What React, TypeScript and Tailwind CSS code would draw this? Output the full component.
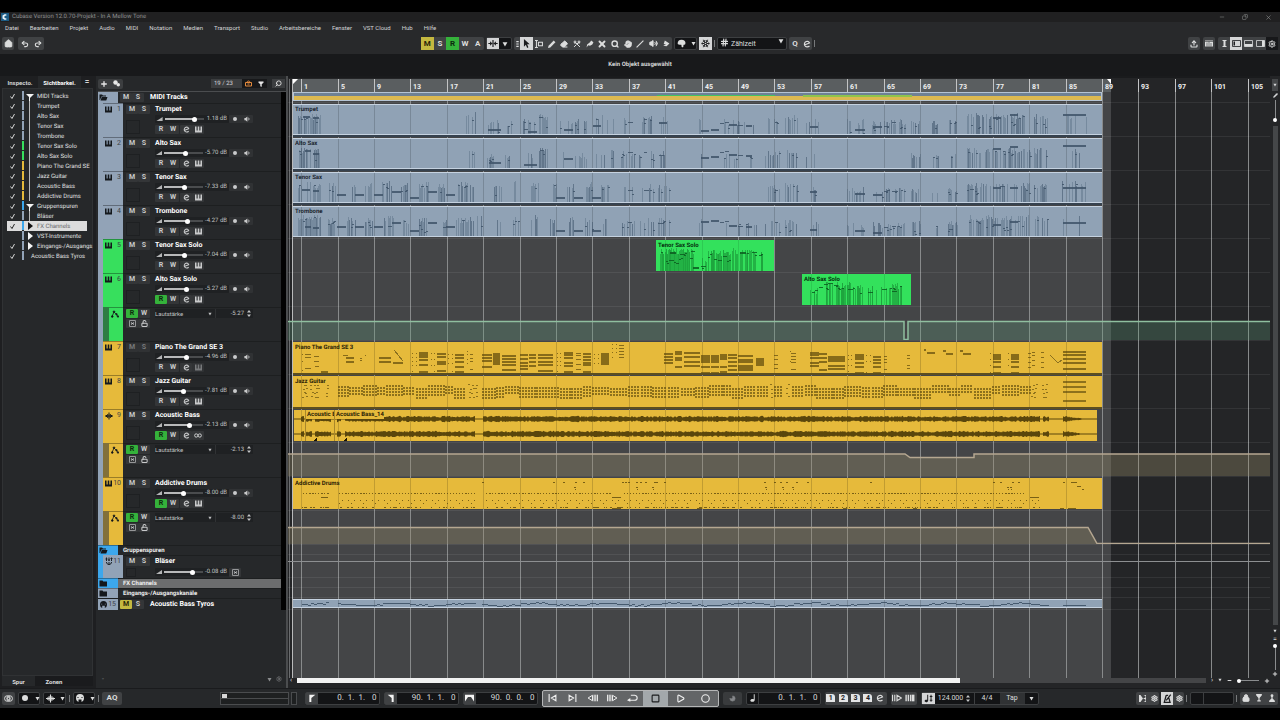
import type { ReactNode } from "react";
import {
  Home, Undo2, Redo2, Search, Plus, Eraser, Scissors, Hand, Volume2, Circle, Settings, Lock, Upload,
  Snowflake, Hash, Minus, X, Copy, Pencil, Play, Square, Moon, Filter, LockOpen,
} from "lucide-react";

const SLATE = "#92a3b7";
const GREEN = "#37df5d";
const YELLOW = "#e6ba3b";

/* ---------- timeline geometry ---------- */
const ORIGIN = 288;
const END = 2000;
const barX = (bar: number) => Math.floor(301.7 + (bar - 1) * 9.1);
const gridBars = Array.from({ length: 45 }, (_, i) => 1 + i * 4);
const labelledBars = gridBars.slice(0, 27);

function rng(seed: number) {
  let s = seed;
  return () => {
    s = (s * 1664525 + 1013904223) % 4294967296;
    return s / 4294967296;
  };
}

/* ---------- small glyphs ---------- */
const Caret = ({ className = "size-[6px]" }: { className?: string }) => (
  <svg viewBox="0 0 10 10" className={className} fill="currentColor"><path d="M1 2h8L5 9z" /></svg>
);
const Keys = ({ className = "size-[8px]" }: { className?: string }) => (
  <svg viewBox="0 0 16 16" className={className} fill="currentColor">
    <path d="M0 1h3.500v9.500h2.700V1h3.600v9.500h2.700V1H16v14H0z" />
  </svg>
);
const Wave = ({ className = "size-[9px]" }: { className?: string }) => (
  <svg viewBox="0 0 16 16" className={className} stroke="currentColor" strokeWidth="2" fill="none">
    <path d="M0 8h16M3 6v4M5.500 4v8M8 1v14M10.500 4v8M13 6v4" />
  </svg>
);
const Nodes = ({ className = "size-[9px]" }: { className?: string }) => (
  <svg viewBox="0 0 16 16" className={className} stroke="currentColor" strokeWidth="1.600" fill="currentColor">
    <path d="M2 13L6 4l5 5 3 4" fill="none" />
    <circle cx="2.500" cy="13" r="1.700" /><circle cx="6" cy="3.500" r="1.700" /><circle cx="11" cy="8.500" r="1.500" /><circle cx="14" cy="13" r="1.500" />
  </svg>
);
const Folder = ({ open = false }: { open?: boolean }) => (
  <svg viewBox="0 0 16 14" className="h-[7px] w-[9px]" fill="#14181c">
    {open ? <path d="M0 1h5l2 2h6v2H4L1 12H0zM4.500 6H16l-2.500 7H2z" /> : <path d="M0 1h6l1.500 2H15v10H0z" />}
  </svg>
);
const EditE = ({ className = "size-[8px]" }: { className?: string }) => (
  <svg viewBox="0 0 16 16" className={className} fill="none" stroke="currentColor" strokeWidth="2.400">
    <path d="M4 9.500L13 6C12 3 9 2 6.500 3 3 4.500 2 8 3.500 11c2 3.500 6.500 3.500 9.500 1" />
  </svg>
);
const Link = () => (
  <svg viewBox="0 0 16 10" className="h-[5px] w-[8px]" fill="none" stroke="currentColor" strokeWidth="2"><circle cx="4.500" cy="5" r="3.300" /><circle cx="11.500" cy="5" r="3.300" /></svg>
);
const Ramp = () => (
  <svg viewBox="0 0 14 9" className="h-[4px] w-[7px]" fill="#b4b5b6"><path d="M0 9L14 0v9z" /></svg>
);
const Speaker = ({ className = "size-[7px]" }: { className?: string }) => (
  <svg viewBox="0 0 16 16" className={className} fill="currentColor" stroke="currentColor"><path d="M1 5h3l5-4v14l-5-4H1z" stroke="none" /><path d="M11.500 4v8M14 6v4" strokeWidth="1.600" /></svg>
);
const Updown = () => (
  <svg viewBox="0 0 8 14" className="h-[7px] w-[4px]" fill="#c4c5c6"><path d="M4 0l4 5H0zM4 14l4-5H0z" /></svg>
);
const BoxedX = () => (
  <svg viewBox="0 0 16 16" className="size-[7px]" fill="none" stroke="currentColor" strokeWidth="1.600"><rect x="1" y="1" width="14" height="14" rx="1" /><path d="M5 5l6 6M11 5l-6 6M5 8h6" /></svg>
);
const Mixer = () => (
  <svg viewBox="0 0 16 16" className="size-[8px]" fill="none" stroke="#1a2026" strokeWidth="2"><path d="M3 1v7M8 1v7M13 1v7M1 4h4M6 6h4M11 3h4M3 10c0 3 2 5 5 5s5-2 5-5M8 10v5" /></svg>
);
const MidiPlug = ({ className = "size-[8px]" }: { className?: string }) => (
  <svg viewBox="0 0 16 16" className={className} fill="currentColor">
    <path fillRule="evenodd" d="M8 0a8 8 0 1 1 0 16A8 8 0 0 1 8 0M5 11h6v5H5zM3 6v2h2V6zM11 6v2h2V6z" />
  </svg>
);
const Grip = () => <span className="h-[7px] w-px bg-[#77797b]" />;

/* ---------- inspector ---------- */
const visibility: [string, string, 0 | 1 | 2, boolean][] = [
  ["MIDI Tracks", SLATE, 1, true], ["Trumpet", SLATE, 0, true], ["Alto Sax", SLATE, 0, true],
  ["Tenor Sax", SLATE, 0, true], ["Trombone", SLATE, 0, true], ["Tenor Sax Solo", GREEN, 0, true],
  ["Alto Sax Solo", GREEN, 0, true], ["Piano The Grand SE", YELLOW, 0, true], ["Jazz Guitar", YELLOW, 0, true],
  ["Acoustic Bass", YELLOW, 0, true], ["Addictive Drums", YELLOW, 0, true], ["Gruppenspuren", "#3ca7ec", 1, true],
  ["Bläser", SLATE, 0, true], ["FX Channels", "#3ca7ec", 2, true], ["VST-Instrumente", SLATE, 2, false],
  ["Eingangs-/Ausgangs", SLATE, 2, true], ["Acoustic Bass Tyros", SLATE, 0, true],
];

function Inspector() {
  return (
    <aside className="flex w-[96px] shrink-0 flex-col bg-[#1e1f21] pl-[2px]">
      <div className="flex h-[12px] items-center text-[6px] font-bold text-[#d4d5d6]">
        <button className="h-full w-[36px] text-center">Inspecto.</button>
        <button className="h-full w-[43px] bg-[#26282a] text-center text-white">Sichtbarkei.</button>
        <button aria-label="Einstellungen" className="w-[12px] text-[8px] leading-none">=</button>
      </div>
      <div className="mr-[3px] flex flex-1 flex-col border border-[#303234] bg-[#26282a]">
        <ul className="pt-[2px] pl-[4px]">
          {visibility.map(([name, color, tree, checked], i) => {
            const active = name === "FX Channels";
            const last = i === visibility.length - 1;
            return (
              <li key={name}>
                <label className={`flex h-[10px] w-[80px] items-stretch text-[6px] leading-[11px] ${active ? "bg-[#dcdcdc] text-[#66686a]" : "text-[#e0e1e2]"}`}>
                  <span className="grid w-[10px] shrink-0 place-items-center">
                    <input type="checkbox" defaultChecked={checked} className="peer col-start-1 row-start-1 size-[6px] appearance-none" />
                    <svg viewBox="0 0 10 10" className="col-start-1 row-start-1 size-[5px] opacity-0 peer-checked:opacity-100" fill="none" stroke={active ? "#111" : "#e8e8e8"} strokeWidth="1.800"><path d="M1 5l3 4L9 0" /></svg>
                  </span>
                  <span className="mr-[2px] ml-[5px] w-[2px] shrink-0 border-b border-[#26282a]" style={{ backgroundColor: color }} />
                  {!last && (
                    <svg viewBox="0 0 8 10" className="h-[10px] w-[8px] shrink-0" fill={active ? "#111" : "#f4f4f4"}>
                      {tree === 1 && <path d="M0 3h8L4 7zM3 6h1v4H3z" />}
                      {tree === 2 && <path d="M2 1v8l5-4z" />}
                      {tree === 0 && <path d="M3 0h1v10H3z" fill="#b9babb" />}
                    </svg>
                  )}
                  <span className={`whitespace-nowrap ${last ? "pl-[5px]" : "pl-[3px]"}`}>{name}</span>
                </label>
              </li>
            );
          })}
        </ul>
      </div>
      <div className="mr-[3px] mb-[2px] flex h-[10px] text-[6px] leading-[11px] font-bold text-[#dcdddd]">
        <button className="w-[33px] bg-[#26282a]">Spur</button>
        <button className="flex-1 bg-[#1a1b1d] pr-5">Zonen</button>
      </div>
    </aside>
  );
}

/* ---------- track list ---------- */
const Pad = ({ children, on = "", dim = false, label }: { children: ReactNode; on?: string; dim?: boolean; label?: string }) => (
  <button aria-label={label} className={`grid h-[9px] w-[12px] place-items-center rounded-[1px] text-[7px] leading-none font-bold ${on || (dim ? "bg-[#303234] text-[#77797b]" : "bg-[#343638] text-[#c9cacb]")}`}>
    {children}
  </button>
);
const ON_GREEN = "bg-[#35b23b] text-[#0c2a0e]";
const ON_YELLOW = "bg-[#c4b840] text-[#2a2708]";
const trackName = "text-[7px] leading-[9px] font-bold whitespace-nowrap text-white";

type Track = { n: number; name: string; color: string; db: string; vol: number; read?: boolean; dim?: boolean; audio?: boolean };

function Fader({ name, vol, db }: { name: string; vol: number; db: string }) {
  return (
    <div className="flex h-full w-[74px] items-center gap-[2px] rounded-[1px] bg-[#1f2123] pl-[1px]">
      <Ramp />
      <input
        type="range" min={0} max={100} defaultValue={vol} aria-label={`Lautstärke ${name}`}
        className="h-[2px] w-[39px] appearance-none [&::-webkit-slider-thumb]:size-[5px] [&::-webkit-slider-thumb]:appearance-none [&::-webkit-slider-thumb]:rounded-full [&::-webkit-slider-thumb]:bg-white"
        style={{ background: `linear-gradient(90deg,#b8b9ba ${vol}%,#4a4c4e ${vol}%)` }}
      />
      <span className="flex-1 pr-[2px] text-right text-[6px] leading-[8px] whitespace-nowrap text-[#c0c1c2]">{db}</span>
    </div>
  );
}

function TrackRow({ t }: { t: Track }) {
  return (
    <div className="flex h-[34px]">
      <span className="w-[5px] bg-[#92a3b7]" />
      <div className="flex w-[20px] justify-between border-t border-[#0005] px-[2px] pt-px text-[7px] leading-[9px] text-[#3b4044]" style={{ backgroundColor: t.color }}>
        <span className="pt-px text-[#14181c]">{t.audio ? <Wave className="size-[8px]" /> : <Keys className="size-[7px]" />}</span>
        {t.n}
      </div>
      <div className="flex flex-1 border-t border-[#1d1f20] pt-px pl-[3px]">
        <div className="w-[29px]">
          <div className="flex"><Pad dim={t.dim}>M</Pad><Pad dim={t.dim}>S</Pad></div>
          <div className="mt-[6px] h-[14px] w-[14px] border border-[#1e2022]" />
        </div>
        <div className="flex flex-col">
          <span className={trackName}>{t.name}</span>
          <div className="mt-px flex h-[8px] items-center">
            <Fader name={t.name} vol={t.vol} db={t.db} />
            <div className="flex h-full rounded-[1px] bg-[#303234] text-[#c9cacb]">
              <button aria-label="Aufnahme" className="grid w-[12px] place-items-center"><span className="size-[4px] rounded-full bg-current" /></button>
              <button aria-label="Monitor" className="grid w-[12px] place-items-center"><Speaker className="size-[6px]" /></button>
            </div>
          </div>
          <div className="mt-[2px] flex">
            <Pad on={t.read ? ON_GREEN : ""}>R</Pad><Pad>W</Pad>
            <span className="w-px" />
            <Pad label="Bearbeiten"><EditE className="size-[7px]" /></Pad>
            <Pad label="Instrument" dim={t.n === 7}>{t.audio ? <Link /> : <Keys className="size-[7px]" />}</Pad>
          </div>
        </div>
      </div>
    </div>
  );
}

function AutomationRow({ color, shade, value }: { color: string; shade: string; value: string }) {
  return (
    <div className="flex h-[34px]">
      <span className="w-[5px] bg-[#92a3b7]" />
      <span className="w-[6px]" style={{ backgroundColor: shade }} />
      <div className="w-[14px] border-t border-[#0005] pt-[2px] pl-[2px] text-[#14181c]" style={{ backgroundColor: color }}><Nodes className="size-[8px]" /></div>
      <div className="flex flex-1 items-start border-t border-[#1d1f20] pt-px pl-[3px]">
        <div className="flex w-[29px] flex-wrap gap-y-px">
          <Pad on={ON_GREEN}>R</Pad><Pad>W</Pad>
          <Pad label="Stumm"><BoxedX /></Pad><Pad label="Sperren"><LockOpen className="size-[7px]" strokeWidth={3.500} /></Pad>
        </div>
        <div className="flex h-[9px] items-center bg-[#1f2123] text-[6px] text-[#c0c1c2]">
          <span className="flex w-[61px] items-center border-r border-[#303234] pr-[3px]">
            <select aria-label="Parameter" className="flex-1 appearance-none leading-[9px] outline-none"><option>Lautstärke</option></select>
            <Caret className="size-[4px]" />
          </span>
          <span className="w-[28px] text-right">{value}</span>
          <span className="flex w-[9px] justify-center"><Updown /></span>
        </div>
      </div>
    </div>
  );
}

function FolderRow({ name, color, open, selected }: { name: string; color: string; open?: boolean; selected?: boolean }) {
  return (
    <div className={`flex h-[10px] ${selected ? "bg-[#6c6d6e]" : ""}`}>
      <div className="flex w-[20px] items-center border-t border-[#0005] pl-[1px]" style={{ backgroundColor: color }}><Folder open={open} /></div>
      <span className="flex-1 border-t border-[#1d1f20] pl-[5px] text-[6px] leading-[9px] font-bold text-[#eee]">{name}</span>
    </div>
  );
}

function TrackList() {
  const seq: Track[] = [
    { n: 1, name: "Trumpet", color: SLATE, db: "1.18 dB", vol: 79 },
    { n: 2, name: "Alto Sax", color: SLATE, db: "-5.70 dB", vol: 57 },
    { n: 3, name: "Tenor Sax", color: SLATE, db: "-7.33 dB", vol: 52 },
    { n: 4, name: "Trombone", color: SLATE, db: "-4.27 dB", vol: 61 },
    { n: 5, name: "Tenor Sax Solo", color: GREEN, db: "-7.04 dB", vol: 53 },
    { n: 6, name: "Alto Sax Solo", color: GREEN, db: "-5.27 dB", vol: 58, read: true },
    { n: 7, name: "Piano The Grand SE 3", color: YELLOW, db: "-4.96 dB", vol: 59, dim: true },
    { n: 8, name: "Jazz Guitar", color: YELLOW, db: "-7.81 dB", vol: 51 },
    { n: 9, name: "Acoustic Bass", color: YELLOW, db: "-2.13 dB", vol: 68, read: true, audio: true },
    { n: 10, name: "Addictive Drums", color: YELLOW, db: "-8.00 dB", vol: 50, read: true },
  ];
  return (
    <section className="flex w-[192px] shrink-0 flex-col border-r-2 border-[#4b4d4f] bg-[#26282a] pl-[2px]">
      <div className="flex h-[15px] items-center pr-px">
        <div className="flex h-[10px] rounded-[2px] bg-[#3c3e40] text-[#e6e6e6]">
          <button aria-label="Spur hinzufügen" className="grid w-[12px] place-items-center"><Plus className="size-[8px]" strokeWidth={4} /></button>
          <button aria-label="Spur-Presets" className="grid w-[13px] place-items-center">
            <svg viewBox="0 0 14 14" className="size-[7px]" fill="currentColor"><circle cx="5" cy="5" r="4.500" /><circle cx="10.500" cy="9.500" r="3.500" /></svg>
          </button>
        </div>
        <div className="ml-auto flex h-[9px] items-center bg-[#17181a]">
          <span className="h-full w-[31px] bg-[#3c3e40] pl-[3px] text-[6px] leading-[9px] text-[#d0d1d2]">19 / 23</span>
          <button aria-label="Sichtbarkeit" className="grid w-[13px] place-items-center text-[#e58a3c]">
            <svg viewBox="0 0 14 12" className="size-[7px]" fill="none" stroke="currentColor" strokeWidth="2"><path d="M1 4h12v7H1zM4 4c0-4 6-4 6 0M5 7h4" /></svg>
          </button>
          <button aria-label="Filter" className="grid w-[12px] place-items-center text-[#e6e6e6]"><Filter className="size-[6px]" fill="currentColor" /></button>
        </div>
        <button aria-label="Suchen" className="ml-[5px] grid h-[9px] w-[13px] place-items-center bg-[#3c3e40] text-[#e6e6e6]"><Search className="size-[7px] -scale-x-100" strokeWidth={3} /></button>
      </div>
      <div className="flex border-t border-[#4b4d4f]">
        <div className="flex flex-1 flex-col">
          <div className="flex h-[11px]">
            <div className="flex w-[20px] items-center bg-[#92a3b7] pl-[1px]"><Folder open /></div>
            <div className="ml-[2px] flex items-center"><Pad>M</Pad><Pad>S</Pad></div>
            <span className={`ml-[6px] pt-px ${trackName}`}>MIDI Tracks</span>
          </div>
          {seq.slice(0, 6).map((t) => <TrackRow key={t.n} t={t} />)}
          <AutomationRow color={GREEN} shade="#2f7d43" value="-5.27" />
          {seq.slice(6, 9).map((t) => <TrackRow key={t.n} t={t} />)}
          <AutomationRow color={YELLOW} shade="#82703a" value="-2.13" />
          <TrackRow t={seq[9]} />
          <AutomationRow color={YELLOW} shade="#82703a" value="-8.00" />
          <FolderRow name="Gruppenspuren" color="#3ca7ec" open />
          <div className="flex h-[23px]">
            <span className="w-[5px] bg-[#3ca7ec]" />
            <div className="flex w-[20px] justify-between bg-[#92a3b7] px-[2px] pt-[2px] text-[7px] leading-[9px] text-[#3b4044]"><Mixer />11</div>
            <div className="flex flex-1 border-t border-[#1d1f20] pt-px pl-[3px]">
              <div className="flex w-[29px] flex-col gap-[2px]">
                <div className="flex"><Pad>M</Pad><Pad>S</Pad></div>
                <div className="h-[9px] w-[10px] border border-[#1e2022]" />
              </div>
              <div className="flex flex-col">
                <span className={trackName}>Bläser</span>
                <div className="mt-[2px] flex h-[8px] items-center">
                  <Fader name="Bläser" vol={75} db="-0.08 dB" />
                  <Pad label="Kanal"><BoxedX /></Pad>
                </div>
              </div>
            </div>
          </div>
          <FolderRow name="FX Channels" color="#3ca7ec" selected />
          <FolderRow name="Eingangs-/Ausgangskanäle" color={SLATE} />
          <div className="flex h-[12px] items-stretch border-t border-[#1d1f20]">
            <div className="flex w-[20px] items-center justify-between bg-[#92a3b7] px-[2px] text-[7px] text-[#3b4044]"><span className="text-[#14181c]"><MidiPlug className="size-[7px]" /></span>15</div>
            <div className="ml-[2px] flex items-center"><Pad on={ON_YELLOW}>M</Pad><Pad>S</Pad></div>
            <span className={`ml-[6px] pt-px ${trackName}`}>Acoustic Bass Tyros</span>
          </div>
        </div>
        <span className="w-[5px] bg-[#020202]" />
      </div>
      <div className="mt-auto flex h-[18px] items-center gap-[4px] px-1 text-[#8a8c8e]">
        <span className="mr-auto text-[7px] leading-none">-</span>
        <Caret className="size-[5px]" />
        <Settings className="size-[6px]" />
      </div>
    </section>
  );
}

/* ---------- clip contents (y is measured from the top of the lane) ---------- */
type Cluster = [x0: number, x1: number, top: number, density: number];
type Dash = [x: number, y: number, w: number];

function melody(clusters: Cluster[], dashes: Dash[], seed: number) {
  const r = rng(seed);
  let stems = "";
  let dark = "";
  let notes = "";
  clusters.forEach(([a, b, top, d]) => {
    let y = top + 2 + r() * 4;
    for (let x = a; x <= b; x++) {
      if (r() > d) continue;
      const t = Math.round(top - 3 + r() * 6);
      if (r() < 0.3) dark += `M${x} ${t}h1V33h-1z`;
      else stems += `M${x} ${t}h1V33h-1z`;
      y = Math.min(top + 12, Math.max(top, y + (r() - 0.5) * 6));
      if (r() < 0.3) notes += `M${x} ${Math.round(y)}h2v1h-2z`;
    }
  });
  dashes.forEach(([x, y, w]) => (notes += `M${x} ${y}h${w}v${w > 5 ? 2 : 1}h${-w}z`));
  return { stems, dark, notes };
}

function Melody({ clusters, dashes, seed, tone = "slate" }: { clusters: Cluster[]; dashes: Dash[]; seed: number; tone?: "slate" | "green" }) {
  const m = melody(clusters, dashes, seed);
  const c = tone === "slate" ? "#42566c" : "#0f7a2a";
  return (
    <g>
      <path d={m.stems} fill={c} opacity={tone === "slate" ? 0.32 : 0.45} />
      <path d={m.dark} fill={c} opacity={0.58} />
      <path d={m.notes} fill={tone === "slate" ? "#3f5369" : "#0c5c20"} opacity={0.85} />
    </g>
  );
}

const shift = (cs: Cluster[], dy: number): Cluster[] => cs.map(([a, b, t, d]) => [a, b, t + dy, d]);
const mid: Cluster[] = [[594, 613, 14, 0.4], [619, 634, 16, 0.3], [639, 653, 15, 0.35], [658, 669, 15, 0.3]];
const late: Cluster[] = [[765, 779, 15, 0.4], [785, 797, 14, 0.4]];
const verse: Cluster[] = [[847, 866, 18, 0.35], [872, 884, 18, 0.4], [885, 905, 18, 0.5]];
const ending: Cluster[] = [[911, 920, 17, 0.55], [931, 938, 19, 0.4], [948, 957, 17, 0.55], [967, 990, 12, 0.65], [991, 1014, 12, 0.5], [1015, 1030, 12, 0.55], [1034, 1047, 13, 0.5]];
const last: Cluster[] = [[1062, 1087, 12, 0.18]];
const walk: Cluster[] = [[328, 336, 14, 0.6], [347, 355, 13, 0.6], [365, 373, 14, 0.6], [382, 393, 12, 0.55], [401, 408, 14, 0.6], [419, 428, 13, 0.6], [438, 446, 14, 0.6], [456, 473, 13, 0.6], [475, 482, 12, 0.4], [493, 502, 13, 0.4], [512, 519, 12, 0.4], [530, 538, 11, 0.4], [549, 556, 13, 0.55], [567, 574, 13, 0.55], [585, 592, 13, 0.55], [601, 608, 14, 0.5]];
const riff = (a: number, b: number, c: number): Dash[] => [[701, a, 8], [711, a - 1, 8], [720, b + 1, 4], [725, b, 4], [729, c, 8], [738, c + 1, 5], [746, c + 1, 6]];

const parts: Record<string, { clusters: Cluster[]; dashes: Dash[] }> = {
  Trumpet: {
    clusters: [[298, 322, 13, 0.6], [466, 475, 11, 0.25], [487, 498, 18, 0.4], [505, 512, 19, 0.6], [523, 534, 17, 0.4], [538, 547, 13, 0.8], [557, 574, 17, 0.2], [575, 586, 18, 0.6], ...mid, [699, 702, 16, 0.6], [724, 756, 18, 0.2], ...late, [805, 818, 17, 0.3], ...verse, ...ending, ...last],
    dashes: [[303, 12, 7], [313, 13, 6], [488, 25, 13], [524, 25, 4], [528, 27, 9], [539, 13, 4], [564, 25, 9], [593, 21, 8], [628, 18, 5], [644, 15, 3], [659, 18, 8], ...riff(26, 18, 20), [775, 18, 3], [810, 22, 8], [855, 25, 10], [873, 22, 9], [884, 22, 5], [892, 18, 4], [993, 13, 8], [1010, 10, 8], [1063, 10, 23]],
  },
  "Alto Sax": {
    clusters: [[298, 320, 13, 0.6], [466, 475, 11, 0.2], [487, 494, 18, 0.5], [505, 512, 19, 0.6], [523, 532, 17, 0.4], [538, 547, 13, 0.8], [557, 564, 17, 0.3], [575, 586, 18, 0.5], ...mid, [699, 702, 16, 0.6], [724, 756, 18, 0.2], ...late, [805, 818, 17, 0.15], ...ending, ...last],
    dashes: [[305, 12, 6], [313, 15, 6], [489, 24, 12], [524, 26, 13], [540, 12, 4], [564, 20, 9], [628, 14, 5], [644, 14, 3], [659, 17, 5], ...riff(19, 13, 16), [993, 10, 8], [1010, 8, 8], [1063, 7, 23]],
  },
  "Tenor Sax": {
    clusters: [[298, 320, 13, 0.6], ...walk, [619, 634, 16, 0.3], [639, 653, 15, 0.35], [658, 669, 15, 0.25], ...late, [805, 818, 17, 0.25], ...verse, ...shift(ending, 2), ...last],
    dashes: [[302, 17, 8], [313, 18, 6], [337, 22, 9], [355, 22, 9], [374, 22, 9], [392, 19, 9], [410, 25, 9], [428, 19, 9], [446, 22, 9], [556, 25, 9], [574, 25, 9], [592, 25, 9], [628, 18, 5], [644, 18, 5], [775, 18, 3], [810, 19, 7], [855, 21, 10], [873, 22, 9], [884, 19, 4], [892, 19, 4], [993, 15, 8], [1010, 15, 8], [1063, 15, 23]],
  },
  Trombone: {
    clusters: [[298, 320, 11, 0.7], ...shift(walk, 1), [619, 634, 16, 0.3], [639, 653, 15, 0.35], [658, 669, 15, 0.3], [699, 702, 16, 0.6], [724, 756, 18, 0.2], ...shift(late, 2), [805, 818, 17, 0.3], ...shift(verse, 1), ...ending, ...last],
    dashes: [[305, 20, 6], [313, 21, 6], [337, 20, 9], [355, 20, 9], [374, 20, 9], [392, 16, 9], [410, 24, 9], [428, 16, 9], [446, 20, 9], [556, 24, 9], [574, 24, 9], [592, 24, 9], [628, 16, 4], [659, 17, 5], ...riff(15, 15, 19), [775, 16, 3], [810, 23, 7], [855, 24, 10], [873, 26, 9], [884, 21, 4], [892, 20, 4], [993, 18, 8], [1010, 15, 8], [1063, 16, 23]],
  },
  "Tenor Sax Solo": {
    clusters: [[659, 663, 13, 0.5], [665, 693, 12, 0.95], [694, 707, 22, 0.25], [708, 718, 13, 0.8], [719, 732, 14, 0.6], [733, 754, 12, 0.7], [755, 767, 13, 0.45]],
    dashes: [[693, 28, 6], [701, 27, 5], [670, 13, 6], [680, 15, 5], [690, 19, 3], [708, 18, 2], [710, 15, 2], [714, 20, 3], [718, 21, 4], [724, 17, 3], [740, 13, 6], [752, 13, 5], [759, 16, 3]],
  },
  "Alto Sax Solo": {
    clusters: [[810, 818, 18, 0.3], [824, 832, 12, 0.6], [835, 850, 12, 0.7], [851, 862, 14, 0.5], [868, 880, 16, 0.5], [881, 904, 13, 0.6]],
    dashes: [[812, 19, 3], [815, 17, 3], [819, 14, 4], [824, 11, 4], [828, 10, 5], [834, 12, 4], [848, 16, 5], [868, 19, 5], [882, 16, 5], [892, 18, 5]],
  },
};

const chords: [x: number, w: number, ys: number[]][] = [
  [305, 6, [13, 16, 27]], [314, 5, [15, 20]], [315, 4, [25]], [321, 7, [30]], [302, 1, [13, 20, 29]], [343, 5, [14]], [346, 8, [16, 20]], [360, 2, [17, 19]], [365, 1, [14]],
  [379, 12, [16, 20]], [393, 10, [21]], [412, 1, [12, 16, 20, 24, 30]], [416, 1, [12, 16, 20, 24]], [419, 9, [11, 13, 15, 18, 23, 30]], [431, 1, [12, 18, 24]], [434, 1, [12, 18, 24, 30]],
  [437, 9, [12, 15, 20, 22, 29]], [448, 1, [13, 17, 22]], [452, 1, [13, 17, 22, 30]], [455, 9, [13, 16, 20, 25, 30]], [467, 1, [10, 13, 18, 22]], [470, 3, [13, 17, 20, 28]],
  [482, 10, [13, 16, 19, 25]], [493, 7, [12, 14, 16, 18, 20, 22]], [502, 14, [14, 17, 20, 23, 28]], [520, 8, [13, 17, 21, 24, 27]], [529, 7, [13, 16, 20, 24]], [538, 15, [13, 16, 20, 23, 29]],
  [557, 1, [12, 16, 20, 24, 30]], [560, 1, [12, 16, 20, 24]], [564, 9, [11, 13, 16, 21, 24, 30]], [576, 5, [12, 14, 18, 23, 28]], [583, 8, [12, 15, 18, 21, 23, 30]],
  [594, 1, [13, 17, 22]], [598, 1, [13, 17, 22]], [601, 8, [12, 14, 16, 18, 20, 22]], [612, 1, [3, 7, 11, 16]], [616, 1, [3, 7, 11]], [619, 5, [4, 7, 10, 13, 16]],
  [664, 9, [12, 15, 18, 21]], [675, 7, [10, 12, 16, 18, 25]], [684, 16, [11, 15, 20, 24]], [701, 9, [14, 16, 18, 20, 25, 31]], [711, 8, [14, 16, 18, 20, 25, 31]], [720, 7, [13, 15, 17, 25, 30]], [728, 9, [13, 16, 20, 24, 28]],
  [738, 15, [14, 18, 20, 24, 26, 28]], [756, 8, [17, 19, 21, 23]], [774, 4, [14, 18, 23, 27]], [791, 5, [12, 15, 18, 21, 28]], [790, 1, [10, 20]], [810, 9, [11, 13, 16, 21, 24]], [819, 8, [12, 16, 20, 28]], [828, 17, [15, 17, 19, 24, 27]],
  [848, 1, [14, 18, 24, 30]], [851, 1, [14, 18, 24]], [855, 9, [13, 15, 17, 21, 25, 31]], [866, 1, [14, 20, 31]], [870, 1, [14, 20]], [873, 8, [15, 18, 21, 25, 31]], [884, 3, [15, 18, 21, 28]], [907, 3, [14, 17, 24, 27]],
  [924, 2, [8, 9]], [927, 8, [11]], [943, 3, [9, 10]], [946, 7, [12]], [960, 3, [9, 10]], [963, 8, [12]], [990, 1, [12, 18, 24, 31]], [993, 8, [13, 15, 17, 20, 25, 31]], [1008, 1, [12, 18, 24]], [1011, 8, [13, 15, 17, 20, 25, 31]],
  [1028, 3, [12, 16, 21, 26]], [1032, 3, [11, 14, 19, 24]], [1041, 3, [11, 16, 21, 26]], [1063, 23, [10, 13, 17, 21, 27]],
];

function pianoPath() {
  return chords.map(([x, w, ys]) => ys.map((y) => `M${x} ${y}h${w}v${w > 6 ? 2 : 1}h${-w}z`).join("")).join("");
}

function guitarPath() {
  const r = rng(77);
  let d = "";
  const seg = (a: number, b: number) => {
    for (let x = a; x < b; ) {
      const w = Math.min(b - x, 8 + Math.floor(r() * 10));
      const top = 10 + Math.floor(r() * 4);
      const rows = r() > 0.5 ? 4 : 3;
      for (let k = 0; k < rows; k++)
        for (let i = x; i < x + w; i += 3) d += `M${i} ${top + k * 3}h2v2h-2z`;
      x += w + 1;
    }
  };
  seg(338, 466);
  seg(482, 768);
  seg(774, 782);
  seg(792, 1030);
  [302, 305, 310, 314, 316, 326, 468, 471, 474, 770, 786, 1031, 1034, 1042, 1044].forEach((x) =>
    [9, 13, 17, 21].forEach((y) => (d += `M${x + Math.floor(r() * 3)} ${y + Math.floor(r() * 2)}h2v1h-2z`)));
  [6, 11, 16, 25].forEach((y) => (d += `M1063 ${y}h23v2h-23z`));
  return d;
}

function drumsPath() {
  const r = rng(31);
  let d = "";
  const dot = (x: number, y: number, w = 1) => (d += `M${x} ${y}h${w}v1h${-w}z`);
  for (let x = 302; x < 1040; x++) {
    if ((x > 328 && x < 338) || (x > 474 && x < 484)) continue;
    if (x % 3 === 0 && (x < 612 || x > 622) && x < 1025) dot(x, 16, r() > 0.7 ? 2 : 1);
    if (x > 338 && x % 6 === 0) dot(x, 23);
    if (x > 338 && x % 12 === 3) dot(x, 26);
    if (r() < 0.28) dot(x, 30, r() > 0.7 ? 2 : 1);
  }
  [482, 553, 563, 575, 583, 622, 625, 628, 636, 640, 645, 654, 656, 664, 764, 774, 780, 786, 796, 807, 870, 993, 1000, 1012, 1018, 1063].forEach((x) => dot(x, 5, 2));
  [574, 636, 652, 765, 782, 792, 1007, 1010].forEach((x) => { dot(x, 10, 2); dot(x + 1, 12); });
  [[321, 7], [612, 9], [1030, 9]].forEach(([x, w]) => dot(x, 20, w));
  [[612, 9], [697, 5], [843, 4], [913, 4], [1060, 4], [1068, 8]].forEach(([x, w]) => dot(x, 31, w));
  dot(1071, 5, 6); dot(1077, 9, 4); dot(1082, 12, 2);
  return d;
}

function wavePath(cy: number, seed: number) {
  const r = rng(seed);
  const blob = (a: number, b: number, amp: (p: number) => number) => {
    let top = `M${a} ${cy}`;
    let bottom = "";
    for (let x = a; x <= b; x++) {
      const h = amp((x - a) / (b - a)) * (0.45 + r() * 0.55);
      top += `L${x} ${(cy - h).toFixed(1)}`;
      bottom = `L${x} ${(cy + h).toFixed(1)}` + bottom;
    }
    return top + bottom + "z";
  };
  const flat = () => 3.2;
  return [
    blob(301, 304, flat), blob(306, 312, flat), blob(315, 331, flat), blob(337, 341, flat), blob(345, 475, flat), blob(483, 1040, flat),
    blob(1043, 1049, flat), blob(1063, 1087, (p) => 3.6 * (1 - p)),
  ].join("") + `M294 ${cy - 0.5}H1097V${cy + 0.5}H294z`;
}

function tyrosPath() {
  const r = rng(9);
  let d = "";
  for (let x = 302; x < 1047; x += 3) {
    if ((x > 328 && x < 338) || (x > 474 && x < 482)) continue;
    const y = Math.round(5 + Math.sin(x / 11) * 1.2 + (r() - 0.5) * 1.5);
    d += `M${x} ${y}h3v1h-3z`;
  }
  return d + "M1063 6h23v1h-23z";
}

/* ---------- arrangement ---------- */
type ClipProps = { x0: number; x1: number; name?: string; kind: "slate" | "green" | "yellow"; children?: ReactNode; h?: number };
const clipStyle = {
  slate: "border-y border-[#c5d2e0] bg-[#90a2b5] text-[#1c2630]",
  green: "bg-[#33e15c] pt-px text-[#06300f]",
  yellow: "bg-[#e6ba3b] pt-px text-[#2b2206]",
};
function Clip({ x0, x1, name, kind, children, h = 34 }: ClipProps) {
  return (
    <div className={`absolute top-px bottom-px overflow-hidden ${clipStyle[kind]}`} style={{ left: x0 - ORIGIN, width: x1 - x0 }}>
      <svg className="absolute inset-x-0 top-0 w-full" height={h - 2} viewBox={`${x0} 1 ${x1 - x0} ${h - 2}`} preserveAspectRatio="xMinYMin" shapeRendering="crispEdges">
        {gridBars.filter((b) => barX(b) > x0 && barX(b) < x1).map((b) => (
          <rect key={b} x={barX(b)} y="0" width="1" height={h} fill="#000" opacity={kind === "green" ? 0.1 : 0.16} />
        ))}
        {children}
      </svg>
      {name && <span className="relative block pl-[2px] text-[6px] leading-[9px] font-bold whitespace-nowrap">{name}</span>}
    </div>
  );
}

const laneBack = { none: "", slate: "bg-[#36424f]", yellow: "bg-[#5c4e20]" };
function Lane({ h, children, under = "none" }: { h: number; children?: ReactNode; under?: keyof typeof laneBack }) {
  return (
    <div className="relative border-b border-[#ffffff12]" style={{ height: h }}>
      {under !== "none" && <div className={`absolute -bottom-px h-[4px] ${laneBack[under]}`} style={{ left: 5, width: 1102 - 293 }} />}
      {children}
    </div>
  );
}

function Curve({ points, fill, stroke }: { points: string; fill: string; stroke: string }) {
  return (
    <svg className="absolute inset-0 h-full w-full" aria-hidden="true">
      <g transform={`translate(${-ORIGIN} 0)`}>
        <path d={`M${ORIGIN} 34L${points}V34z`} fill={fill} />
        <path d={`M${points}`} fill="none" stroke={stroke} strokeWidth="1.500" />
      </g>
    </svg>
  );
}

function Arrangement() {
  return (
    <section className="flex min-w-0 flex-1 flex-col bg-[#242527]">
      <div className="flex min-h-0 flex-1">
        <div className="relative min-w-0 flex-1 overflow-hidden">
          <div className="absolute inset-y-0 top-[3px] bg-[#444547]" style={{ left: 5, width: 1111 - 293 }} />
          <svg className="absolute inset-0 h-full w-full" shapeRendering="crispEdges" aria-hidden="true">
            {gridBars.map((b) => <rect key={b} x={barX(b) - ORIGIN} y="16" width="1" height="100%" fill="#888a8b" />)}
            <rect x="4" y="3" width="1" height="100%" fill="#b9babb" />
            <rect x="1" y="3" width="1" height="100%" fill="#6a6c6e" />
          </svg>
          <div className="relative h-[16px] border-t-2 border-[#1a1b1d]">
            <div className="absolute inset-y-0 top-px bg-[#5a5e60]" style={{ left: 5, width: 1111 - 293 }} />
            {labelledBars.map((b) => (
              <span key={b} className="absolute top-px bottom-0 border-l border-[#c3c4c5] pt-[3px] pl-[2px] text-[7px] leading-[10px] font-bold text-[#f0f0f0]" style={{ left: barX(b) - ORIGIN }}>{b}</span>
            ))}
            <svg className="absolute inset-0 h-full w-full" aria-hidden="true"><path d="M5 1h5l-5 5zM819 1h4v5z" fill="#fff" /></svg>
          </div>
          <Lane h={11}>
            <div className="absolute top-0 bottom-px border border-[#b5c4d4] bg-[#6f8194]" style={{ left: 5, width: 809 }}>
              <div className="absolute inset-x-0 bottom-0 h-[4px] bg-[#dcb951]" />
              <div className="absolute bottom-[4px] h-px w-[118px] bg-[#43c065]" style={{ left: 656 - 293 }} />
              <div className="absolute bottom-[3px] h-[2px] w-[109px] bg-[#8fc44c]" style={{ left: 802 - 293 }} />
            </div>
          </Lane>
          {["Trumpet", "Alto Sax", "Tenor Sax", "Trombone"].map((name, i) => (
            <Lane key={name} h={34} under={i < 3 ? "slate" : "none"}>
              <Clip x0={293} x1={1102} name={name} kind="slate"><Melody {...parts[name]} seed={11 + i * 7} /></Clip>
            </Lane>
          ))}
          <Lane h={34}><Clip x0={656} x1={774} name="Tenor Sax Solo" kind="green"><Melody {...parts["Tenor Sax Solo"]} seed={5} tone="green" /></Clip></Lane>
          <Lane h={34}><Clip x0={802} x1={911} name="Alto Sax Solo" kind="green"><Melody {...parts["Alto Sax Solo"]} seed={8} tone="green" /></Clip></Lane>
          <Lane h={34}>
            <Curve points={`${ORIGIN} 14.500H904V32.500H908V14.500H${END}`} fill="#64a07c48" stroke="#8fbf9f" />
          </Lane>
          <Lane h={34} under="yellow">
            <Clip x0={293} x1={1102} name="Piano The Grand SE 3" kind="yellow">
              <path d={pianoPath()} fill="#5e4a0c" opacity={0.7} />
              <path d="M394 9l9 11M1050 14l8 8 4-3" stroke="#8a7020" fill="none" />
            </Clip>
          </Lane>
          <Lane h={34} under="yellow"><Clip x0={293} x1={1102} name="Jazz Guitar" kind="yellow"><path d={guitarPath()} fill="#5e4a0c" opacity={0.65} /></Clip></Lane>
          <Lane h={34}>
            <Clip x0={294} x1={1097} kind="yellow">
              <path d={wavePath(10, 3) + wavePath(25, 4)} fill="#5a460c" shapeRendering="auto" />
              <path d="M305 1h1v32h-1zM334 1h1v32h-1z" fill="#a8862a" />
              <path d="M317 29l-4 3h4zM347 29l-4 3h4z" fill="#1a1402" />
            </Clip>
            <span className="absolute top-[2px] left-[18px] w-[28px] overflow-hidden bg-[#e6ba3b] pl-[1px] text-[6px] leading-[8px] font-bold whitespace-nowrap text-[#2b2206]">Acoustic B</span>
            <span className="absolute top-[2px] left-[47px] bg-[#e6ba3b] pl-[1px] text-[6px] leading-[8px] font-bold whitespace-nowrap text-[#2b2206]">Acoustic Bass_14</span>
          </Lane>
          <Lane h={34}>
            <Curve points={`${ORIGIN} 11H905L910 14.500H974V11H${END}`} fill="#9a8e6c58" stroke="#b5a791" />
          </Lane>
          <Lane h={34}><Clip x0={293} x1={1102} name="Addictive Drums" kind="yellow"><path d={drumsPath()} fill="#5e4a0c" opacity={0.8} /></Clip></Lane>
          <Lane h={34}>
            <Curve points={`${ORIGIN} 16.500H1088L1097 32.500H${END}`} fill="#9a8e6c58" stroke="#b5a791" />
          </Lane>
          <Lane h={10} />
          <Lane h={23}><div className="absolute inset-x-0 top-[6px] h-px bg-[#8d8f91]" /></Lane>
          <Lane h={10} />
          <Lane h={10} />
          <Lane h={12}><Clip x0={293} x1={1102} kind="slate" h={12}><path d={tyrosPath()} fill="#3a4d62" opacity={0.85} /></Clip></Lane>
        </div>
        <div className="flex w-[10px] flex-col items-center bg-[#242527] pt-[3px] text-[#d6d7d8]">
          <button aria-label="Lineal" className="grid h-[12px] w-[6px] place-items-center bg-[#454749]"><Caret className="size-[4px]" /></button>
          <Pencil className="mt-[2px] size-[5px]" fill="currentColor" />
          <span className="mt-[2px] flex h-[22px] w-px flex-col items-center justify-end bg-[#8a8c8e]"><span className="size-[4px] rounded-full bg-white" /></span>
          <span className="my-1 w-[5px] flex-1 bg-[#454749]" />
          <Caret className="size-[4px]" />
          <span className="mt-[3px] text-[7px] leading-[6px]">=</span>
          <span className="mt-[2px] flex h-[26px] w-px flex-col items-center bg-[#8a8c8e]"><span className="size-[4px] rounded-full bg-white" /></span>
          <Plus className="my-px size-[6px]" strokeWidth={4} />
        </div>
      </div>
      <div className="flex h-[10px] items-start gap-[5px] bg-[#242527] pr-[10px] pl-[2px] text-[#d6d7d8]">
        <span className="w-[3px] text-[7px] leading-[5px]">‹</span>
        <div className="-ml-[1px] h-[5px] flex-1 bg-[#444547]"><div className="h-full w-[73%] bg-[#f2f2f2]" /></div>
        <span className="text-[7px] leading-[5px]">›</span>
        <Caret className="size-[4px]" />
        <Minus className="size-[5px]" strokeWidth={5} />
        <span className="mt-[2px] flex h-px w-[22px] items-center bg-[#8a8c8e]"><span className="size-[4px] rounded-full bg-white" /></span>
        <Plus className="size-[6px]" strokeWidth={4} />
      </div>
    </section>
  );
}

/* ---------- toolbars ---------- */
const group = "flex h-[13px] items-stretch rounded-[2px] bg-[#404244] text-[#dcdddd]";
const well = "flex h-[13px] items-stretch rounded-[2px] border border-[#3d3f41] bg-[#131416] text-[#dcdddd]";
const Btn = ({ label, children, tone = "" }: { label: string; children: ReactNode; tone?: string }) => (
  <button aria-label={label} className={`grid min-w-[12px] flex-1 place-items-center text-[8px] leading-none font-bold ${tone}`}>{children}</button>
);
const LIT = "bg-[#d4d5d6] text-[#1c1d1f]";

const Pane = ({ d }: { d: string }) => (
  <svg viewBox="0 0 18 14" className="h-[7px] w-[9px]" fill="none" stroke="currentColor" strokeWidth="1.600"><path d="M1 1h16v12H1z" /><path d={d} fill="currentColor" stroke="none" /></svg>
);

function Toolbar() {
  return (
    <div className="flex h-[20px] items-center justify-between bg-[#28292b] pr-[2px] pb-px pl-[2px]">
      <div className="flex gap-1">
        <div className={group}><Btn label="Start"><Home className="size-[9px]" fill="currentColor" /></Btn></div>
        <div className={`${group} w-[26px]`}><Btn label="Rückgängig"><Undo2 className="size-[8px]" strokeWidth={3.500} /></Btn><Btn label="Wiederherstellen"><Redo2 className="size-[8px]" strokeWidth={3.500} /></Btn></div>
      </div>
      <div className="flex items-center gap-[2px] pl-[4px]">
        <div className={`${group} w-[63px]`}>
          <Btn label="Mute" tone="bg-[#c4b840] text-[#2a2708]">M</Btn><Btn label="Solo">S</Btn><Btn label="Read" tone={ON_GREEN}>R</Btn><Btn label="Write">W</Btn><Btn label="Automation">A</Btn>
        </div>
        <div className={`${well} w-[26px]`}>
          <Btn label="Auto-Scroll" tone={LIT}>
            <svg viewBox="0 0 16 12" className="h-[7px] w-[10px]" fill="currentColor"><path d="M7 0h2v12H7zM0 5h3V2l4 4-4 4V7H0zM9 6l4-4v3h3v2h-3v3z" /></svg>
          </Btn>
          <Btn label="Auto-Scroll Optionen"><Caret /></Btn>
        </div>
        <div className={`${group} w-[158px]`}>
          <span className="grid w-[6px] place-items-center">
            <svg viewBox="0 0 4 10" className="h-[6px] w-[3px]" fill="currentColor"><path d="M0 0h4v2H0zM0 4h4v2H0zM0 8h4v2H0z" /></svg>
          </span>
          <Btn label="Objektauswahl" tone={LIT}><svg viewBox="0 0 12 14" className="size-[9px]" fill="currentColor"><path d="M2 0v12l3-3 2 5 2-1-2-5h4z" /></svg></Btn>
          <Btn label="Bereichsauswahl"><svg viewBox="0 0 14 14" className="size-[8px]" fill="none" stroke="currentColor" strokeWidth="1.800"><path d="M0 1h5M0 13h5M2.500 1v12M6 4h7v6H6z" /></svg></Btn>
          <Btn label="Stift"><svg viewBox="0 0 14 14" className="size-[8px]" fill="currentColor"><path d="M0 14l1-4L10 1l3 3-9 9z" /></svg></Btn>
          <Btn label="Löschen"><Eraser className="size-[8px]" strokeWidth={3} fill="currentColor" /></Btn>
          <Btn label="Schere"><Scissors className="size-[8px] rotate-90" strokeWidth={3} /></Btn>
          <Btn label="Kleben"><svg viewBox="0 0 14 14" className="size-[8px]" fill="currentColor"><path d="M1 13l1-5 5-4 2-3 4 3-2 4-4 2-3-1z" /></svg></Btn>
          <Btn label="Stummschalten"><X className="size-[10px]" strokeWidth={4.500} /></Btn>
          <Btn label="Zoom"><Search className="size-[8px]" strokeWidth={4} /></Btn>
          <Btn label="Verschieben"><Hand className="size-[8px]" fill="currentColor" strokeWidth={3} /></Btn>
          <Btn label="Linie"><svg viewBox="0 0 14 14" className="size-[8px]" stroke="currentColor" strokeWidth="2"><path d="M1 13L13 1" /></svg></Btn>
          <Btn label="Wiedergabe"><Volume2 className="size-[9px]" fill="currentColor" strokeWidth={2.500} /></Btn>
          <Btn label="Farbe"><svg viewBox="0 0 14 14" className="size-[8px]" fill="currentColor"><path d="M5 1l8 5-5 5-6-1 5-2-4-1z" /></svg></Btn>
        </div>
        <div className={`${well} w-[23px]`}>
          <Btn label="Farbpalette"><svg viewBox="0 0 14 14" className="size-[9px]" fill="currentColor"><path d="M7 1a6 5 0 0 1 6 6c0 3-3 1-3 3s0 3-2 3c-2-1 0-4-2-4S1 9 1 7a6 6 0 0 1 6-6" /></svg></Btn>
          <Btn label="Farben"><Caret className="size-[5px]" /></Btn>
        </div>
        <div className={`${group} w-[13px]`}><Btn label="Raster" tone={LIT}><Snowflake className="size-[9px]" strokeWidth={2.500} /></Btn></div>
        <Grip />
        <div className={`${well} w-[70px] items-center gap-[2px] px-[2px] text-[7px]`}>
          <Hash className="size-[9px]" strokeWidth={3} />
          <select aria-label="Rastertyp" className="flex-1 appearance-none leading-[10px] outline-none"><option>Zählzeit</option></select>
          <Caret />
        </div>
        <div className={`${group} w-[23px]`}><Btn label="Quantisieren">Q</Btn><Btn label="Quantisierungsfeld"><EditE /></Btn></div>
        <Grip />
      </div>
      <div className="flex gap-[3px]">
        <div className={group}><Btn label="Export"><Upload className="size-[8px]" strokeWidth={3.500} /></Btn></div>
        <div className={group}><Btn label="MixConsole"><svg viewBox="0 0 16 14" className="h-[7px] w-[8px]" fill="currentColor"><path d="M0 1h16v12H0z" /><path d="M4 5v8M8 3v10M12 6v7M0 3h16" stroke="#404244" strokeWidth="1.300" /></svg></Btn></div>
        <div className={`${group} w-[60px]`}>
          <Btn label="Linke Zone"><svg viewBox="0 0 8 14" className="h-[7px] w-[5px]" fill="currentColor"><path d="M0 0h8v2H6v10h2v2H0v-2h2V2H0z" /></svg></Btn>
          <Btn label="Inspector" tone={LIT}><Pane d="M3 3h3v8H3z" /></Btn>
          <Btn label="Untere Zone"><Pane d="M1 8h16v5H1z" /></Btn>
          <Btn label="Rechte Zone"><Pane d="M12 1h5v12h-5z" /></Btn>
          <Btn label="Layout" tone="bg-[#17181a]"><Settings className="size-[8px]" strokeWidth={3} /></Btn>
        </div>
      </div>
    </div>
  );
}

const Readout = ({ parts: p }: { parts: string[] }) => (
  <span className="flex flex-1 items-center justify-end gap-[4px] pr-[2px] text-[8px] leading-[10px] font-normal">
    {p.map((s, i) => <span key={i} className={i === p.length - 1 ? "ml-[3px]" : ""}>{s}</span>)}
  </span>
);

function TransportBar() {
  return (
    <div className="flex h-[20px] items-center justify-between border-t border-[#1a1b1d] bg-[#26282a] px-[2px] pb-px">
      <div className="flex items-center gap-[3px]">
        <div className={`${group} w-[13px]`}><Btn label="Constrain"><svg viewBox="0 0 16 12" className="h-[7px] w-[9px]" fill="none" stroke="currentColor" strokeWidth="1.700"><circle cx="6" cy="6" r="5" /><circle cx="10" cy="6" r="5" /><circle cx="8" cy="6" r="2" /></svg></Btn></div>
        <div className={`${well} w-[22px]`}><Btn label="Aufnahmemodus"><span className="size-[6px] rounded-full bg-current" /></Btn><Btn label="Aufnahmeoptionen"><Caret className="size-[5px]" /></Btn></div>
        <div className={`${well} w-[23px]`}><Btn label="Audiomodus"><Wave /></Btn><Btn label="Audiooptionen"><Caret className="size-[5px]" /></Btn></div>
        <Grip />
        <div className={`${well} w-[22px]`}><Btn label="MIDI-Modus"><MidiPlug /></Btn><Btn label="MIDI-Optionen"><Caret className="size-[5px]" /></Btn></div>
        <Grip />
        <div className={`${group} w-[20px]`}><Btn label="Auto-Quantisierung">AQ</Btn></div>
      </div>
      <div className="flex items-center gap-[4px]">
        <div className="flex gap-[2px]">
          <div className="flex h-[13px] w-[69px] flex-col border border-[#4a4c4e] bg-[#1e2021]"><div className="h-[6px] border-b border-[#4a4c4e] pt-px pl-px"><div className="h-[4px] w-[5px] bg-[#d8d8d8]" /></div></div>
          <div className="h-[13px] w-[6px] border border-[#4a4c4e] bg-[#1e2021]" />
        </div>
        <div className={`${well} ml-1 w-[75px]`}><Btn label="Linker Locator" tone="max-w-[12px] bg-[#404244]"><svg viewBox="0 0 10 12" className="size-[8px]" fill="#f4f4f4"><path d="M1 1h9L4 6v6H1z" /></svg></Btn><Readout parts={["0.", "1.", "1.", "0"]} /></div>
        <div className={`${well} w-[75px]`}><Btn label="Rechter Locator" tone="max-w-[12px] bg-[#404244]"><svg viewBox="0 0 10 12" className="size-[8px]" fill="#f4f4f4"><path d="M9 1H0l6 5v6h3z" /></svg></Btn><Readout parts={["90.", "1.", "1.", "0"]} /></div>
        <div className={`${well} w-[75px]`}><Btn label="Punch" tone="max-w-[12px] bg-[#404244]"><svg viewBox="0 0 12 10" className="size-[9px]" fill="#f4f4f4"><path d="M0 0h12v9L8 3H4L0 9z" /></svg></Btn><Readout parts={["90.", "0.", "0.", "0"]} /></div>
        <div className="flex h-[17px] w-[177px] items-stretch rounded-[2px] border border-[#b5b6b7] bg-[#636567] text-[#f0f0f0]">
          <Btn label="Zum Anfang"><svg viewBox="0 0 16 14" className="h-[8px] w-[9px]" fill="none" stroke="currentColor" strokeWidth="2"><path d="M2 0v14M14 2v10L6 7z" /></svg></Btn>
          <Btn label="Zum Ende"><svg viewBox="0 0 16 14" className="h-[8px] w-[9px]" fill="none" stroke="currentColor" strokeWidth="2"><path d="M14 0v14M2 2v10l8-5z" /></svg></Btn>
          <Btn label="Rücklauf"><svg viewBox="0 0 20 14" className="h-[8px] w-[11px]" fill="none" stroke="currentColor" strokeWidth="1.800"><path d="M10 2v10L2 7zM13 1v12M16 1v12M19 1v12" /></svg></Btn>
          <Btn label="Vorlauf"><svg viewBox="0 0 20 14" className="h-[8px] w-[11px]" fill="none" stroke="currentColor" strokeWidth="1.800"><path d="M10 2v10l8-5zM7 1v12M4 1v12M1 1v12" /></svg></Btn>
          <Btn label="Cycle"><svg viewBox="0 0 20 14" className="h-[8px] w-[11px]" fill="none" stroke="currentColor" strokeWidth="2"><path d="M7 2h7c6 1 6 9 0 9H4" /><path d="M6 7v7l-6-3z" fill="currentColor" stroke="none" /></svg></Btn>
          <button aria-label="Stopp" className="grid w-[25px] place-items-center bg-[#a3a8ab] text-[#1c1d1f]"><Square className="size-[9px]" strokeWidth={3} /></button>
          <button aria-label="Wiedergabe" className="grid w-[25px] place-items-center"><Play className="size-[9px]" strokeWidth={3} /></button>
          <button aria-label="Aufnahme" className="grid w-[25px] place-items-center"><Circle className="size-[9px]" strokeWidth={3} /></button>
        </div>
        <div className="flex h-[13px] w-[19px] rounded-[2px] bg-[#393b3d] text-[#85878a]"><Btn label="Pre-Roll"><Moon className="size-[7px] -scale-x-100" fill="currentColor" /></Btn></div>
        <div className={`${well} w-[75px]`}>
          <Btn label="Zeitformat" tone="max-w-[12px] border-r border-[#3d3f41]"><svg viewBox="0 0 8 12" className="h-[8px] w-[5px]" fill="currentColor"><path d="M6 0h1.500v9c0 4-7 4-7 1 0-2 3-3 5.500-2z" /></svg></Btn>
          <Readout parts={["0.", "1.", "1.", "0"]} />
        </div>
        <div className={`${group} w-[62px]`}>
          {["1", "2", "3", "4"].map((n) => (
            <Btn key={n} label={`Marker ${n}`}><span className="grid h-[8px] w-[9px] place-items-center rounded-tr-[3px] bg-[#e4e5e6] text-[7px] leading-none text-[#1c1d1f]">{n}</span></Btn>
          ))}
          <Btn label="Marker bearbeiten"><EditE /></Btn>
        </div>
        <div className={`${group} w-[26px]`}>
          <Btn label="Pre-Roll aktivieren"><svg viewBox="0 0 18 14" className="h-[8px] w-[10px]" fill="none" stroke="currentColor" strokeWidth="2"><path d="M1 1v12M5 1v12M9 2v10l8-5z" /></svg></Btn>
          <Btn label="Post-Roll aktivieren"><svg viewBox="0 0 18 14" className="h-[8px] w-[10px]" fill="none" stroke="currentColor" strokeWidth="2.500"><path d="M2 1v12M6 1v12M10 1v12" /><path d="M12 1h5v12h-5z" fill="currentColor" stroke="none" /></svg></Btn>
        </div>
        <div className={`${well} w-[118px] text-[7px] leading-[10px]`}>
          <Btn label="Tempospur" tone={`max-w-[13px] ${LIT}`}><svg viewBox="0 0 14 14" className="size-[9px]" fill="currentColor"><path d="M5 1h1.500v9c0 3.500-5.500 3.500-5.500 1 0-2 2-2.500 4-2zM9 3h4v1.500H9zM9 9h4v1.500H9zM10.200 1h1.500v11h-1.500z" /></svg></Btn>
          <span className="flex w-[39px] items-center justify-center gap-[3px]">124.000<Updown /></span>
          <span className="grid w-[26px] place-items-center border-l border-[#3d3f41]">4/4</span>
          <button className="w-[25px] bg-[#303234]">Tap</button>
          <Btn label="Tap-Optionen"><Caret className="size-[5px]" /></Btn>
        </div>
      </div>
      <div className="flex items-center gap-[2px]">
        <div className={`${group} w-[23px]`}>
          <Btn label="Punch In"><svg viewBox="0 0 14 14" className="size-[7px]" fill="currentColor"><path d="M0 0h3l5 7-5 7H0zM9 0h5v14H9l4-2V9L8 7l5-2V2z" /></svg></Btn>
          <Btn label="Punch-Einstellungen"><Settings className="size-[7px]" strokeWidth={3.500} /></Btn>
        </div>
        <div className={`${group} w-[23px]`}>
          <Btn label="Metronom" tone={LIT}><svg viewBox="0 0 14 14" className="size-[9px]" fill="none" stroke="currentColor" strokeWidth="2"><path d="M5 2L2 13h9L9 6M5 10l7-9M5 2h3" /></svg></Btn>
          <Btn label="Metronom-Einstellungen"><Settings className="size-[7px]" strokeWidth={3.500} /></Btn>
        </div>
        <Grip />
        <div className={`${well} ml-px w-[44px]`}><span className="w-[13px] border-r border-[#3d3f41]" /></div>
        <Grip />
        <div className={`${group} ml-px w-[38px]`}>
          <Btn label="Sperren"><Lock className="size-[8px]" fill="currentColor" strokeWidth={3} /></Btn>
          <Btn label="Oben"><svg viewBox="0 0 12 14" className="size-[8px]" fill="currentColor"><path d="M1 0h10v2L7 7v4h2v2H3v-2h2V7L1 2z" /></svg></Btn>
          <Btn label="Unten"><svg viewBox="0 0 12 14" className="size-[8px]" fill="currentColor"><circle cx="6" cy="3" r="2.500" /><path d="M5 5h2v3l4 4v2H1v-2l4-4z" /></svg></Btn>
        </div>
      </div>
    </div>
  );
}

const menus = ["Datei", "Bearbeiten", "Projekt", "Audio", "MIDI", "Notation", "Medien", "Transport", "Studio", "Arbeitsbereiche", "Fenster", "VST Cloud", "Hub", "Hilfe"];

export default function App() {
  return (
    <div className="flex min-h-screen flex-col overflow-hidden bg-black py-3 font-[Roboto,'Open_Sans',sans-serif] text-[7px] text-[#d4d5d6] select-none [text-rendering:geometricPrecision]">
      <header className="flex h-[10px] items-center bg-[#202021] pr-[8px] pl-[1px] text-[#8f9091]">
        <svg viewBox="0 0 16 16" className="size-[8px]"><rect width="16" height="16" fill="#1d5c86" /><path d="M12 4L8 2 3 5v6l5 3 4-2-4-2-2-2 2-2z" fill="#e8f2f8" /></svg>
        <h1 className="ml-[3px] text-[6px] leading-[10px]">Cubase Version 12.0.70-Projekt - In A Mellow Tone</h1>
        <div className="ml-auto flex items-center gap-[17px]">
          <button aria-label="Minimieren"><Minus className="size-[6px]" /></button>
          <button aria-label="Wiederherstellen"><Copy className="size-[6px] -scale-x-100" /></button>
          <button aria-label="Schließen"><X className="size-[7px]" /></button>
        </div>
      </header>
      <nav className="flex h-[12px] items-center gap-[11px] bg-[#28292b] pl-[5px] text-[6px] leading-[12px]">
        {menus.map((m) => <button key={m}>{m}</button>)}
      </nav>
      <Toolbar />
      <div className="grid h-[22px] place-items-center bg-[#18191b] text-[6px] leading-[20px] font-bold">Kein Objekt ausgewählt</div>
      <main className="flex min-h-0 flex-1">
        <Inspector />
        <TrackList />
        <Arrangement />
      </main>
      <TransportBar />
    </div>
  );
}
